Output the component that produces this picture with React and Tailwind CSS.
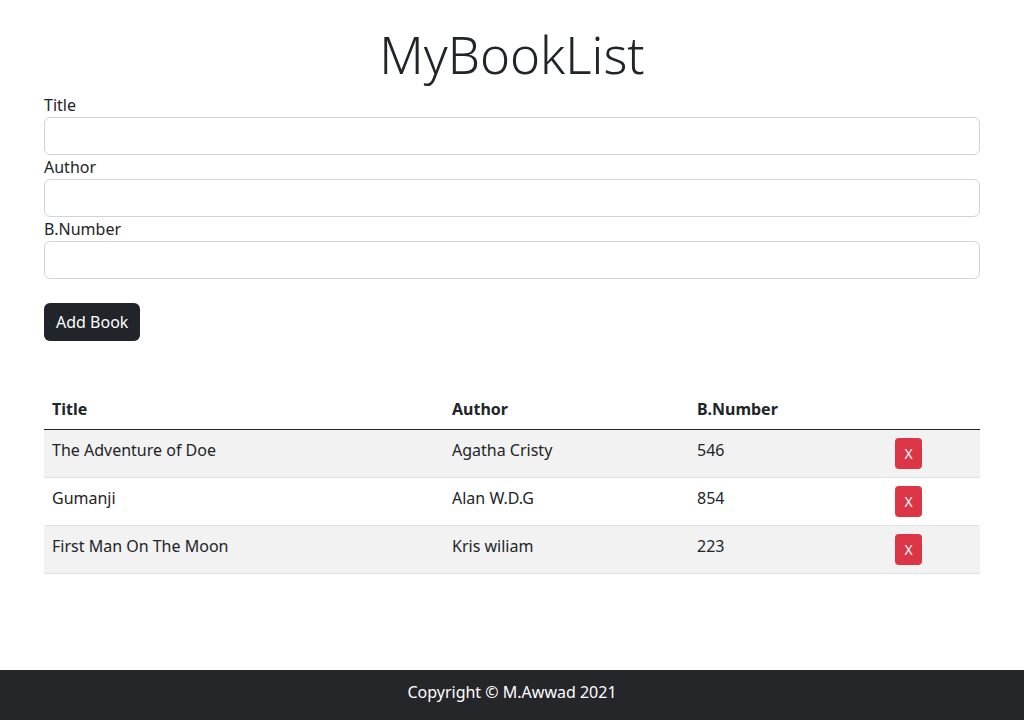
import React, { useState } from 'react';

const initialBooks = [
  { id: 1, title: 'The Adventure of Doe', author: 'Agatha Cristy', number: '546' },
  { id: 2, title: 'Gumanji', author: 'Alan W.D.G', number: '854' },
  { id: 3, title: 'First Man On The Moon', author: 'Kris wiliam', number: '223' },
];

const Field = ({ label, value, onChange }) => (
  <div>
    <label className="block text-base leading-6">{label}</label>
    <input
      type="text"
      value={value}
      onChange={onChange}
      className="block w-full h-[38px] px-3 border border-[#ced4da] rounded-md bg-white focus:outline-none"
    />
  </div>
);

export default function App() {
  const [books, setBooks] = useState(initialBooks);
  const [title, setTitle] = useState('');
  const [author, setAuthor] = useState('');
  const [number, setNumber] = useState('');

  const addBook = (e) => {
    e.preventDefault();
    if (!title || !author || !number) return;
    setBooks([...books, { id: Date.now(), title, author, number }]);
    setTitle('');
    setAuthor('');
    setNumber('');
  };

  const removeBook = (id) => setBooks(books.filter(b => b.id !== id));

  return (
    <div className="min-h-screen flex flex-col bg-white text-[#212529] font-['Noto_Sans',sans-serif]">
      <div className="w-[936px] mx-auto">
        <h1 className="mt-6 mb-2 text-center text-[51px] leading-[1.2] font-light">MyBookList</h1>

        {/* Form */}
        <form onSubmit={addBook}>
          <Field label="Title" value={title} onChange={(e) => setTitle(e.target.value)} />
          <Field label="Author" value={author} onChange={(e) => setAuthor(e.target.value)} />
          <Field label="B.Number" value={number} onChange={(e) => setNumber(e.target.value)} />
          <button
            type="submit"
            className="mt-6 h-[38px] px-3 rounded-md bg-[#212529] text-white text-base"
          >
            Add Book
          </button>
        </form>

        {/* Books table */}
        <table className="mt-12 w-full text-left border-collapse text-base">
          <thead>
            <tr className="border-b-[1.5px] border-[#212529]">
              <th className="w-[400px] px-2 py-2 font-bold">Title</th>
              <th className="w-[245px] px-2 py-2 font-bold">Author</th>
              <th className="w-[198px] px-2 py-2 font-bold">B.Number</th>
              <th className="px-2 py-2"></th>
            </tr>
          </thead>
          <tbody>
            {books.map((book, i) => (
              <tr key={book.id} className={`border-b border-[#dee2e6] ${i % 2 === 0 ? 'bg-[#f2f2f2]' : 'bg-white'}`}>
                <td className="px-2 py-2 leading-6 align-top h-[48px]">{book.title}</td>
                <td className="px-2 py-2 leading-6 align-top">{book.author}</td>
                <td className="px-2 py-2 leading-6 align-top">{book.number}</td>
                <td className="px-2 py-2 align-top">
                  <button
                    onClick={() => removeBook(book.id)}
                    className="w-[27px] h-[31px] rounded bg-[#dc3545] text-white text-sm"
                  >
                    X
                  </button>
                </td>
              </tr>
            ))}
          </tbody>
        </table>
      </div>

      <footer className="mt-auto h-[50px] pb-[6px] flex items-center justify-center bg-[#252629] text-white text-base">
        Copyright © M.Awwad 2021
      </footer>
    </div>
  );
}
